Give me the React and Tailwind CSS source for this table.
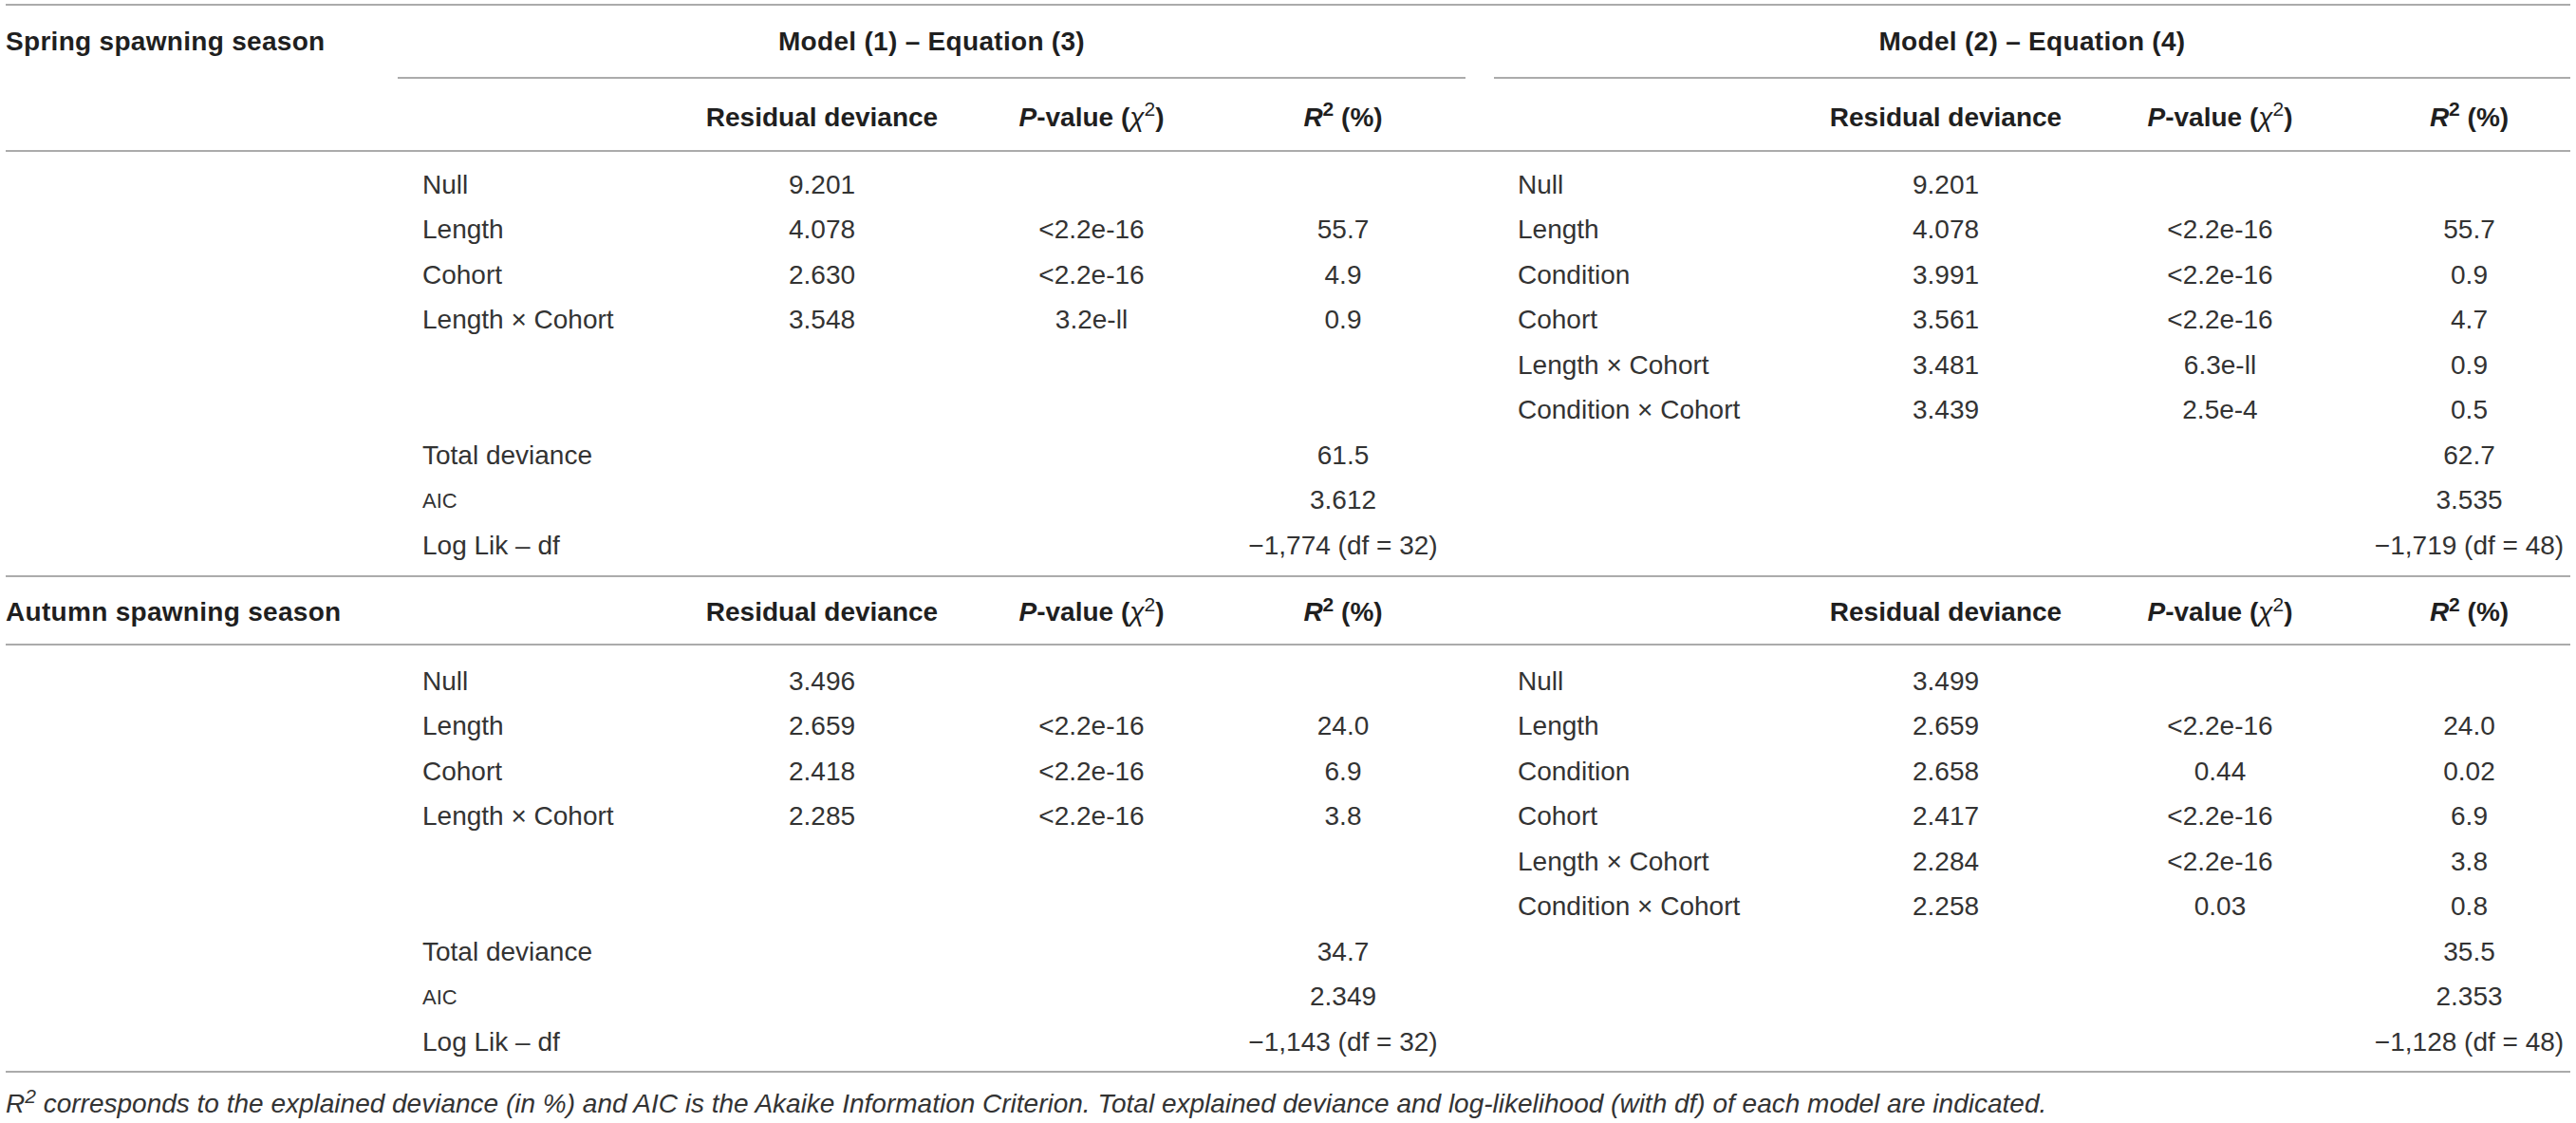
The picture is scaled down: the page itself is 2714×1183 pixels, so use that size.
const grid = 'grid grid-cols-[413px_299px_296px_272px_258px_30px_343px_266px_312px_213px]'

const spring = {
  m1: [
    ['Null', '9.201', '', ''],
    ['Length', '4.078', '<2.2e-16', '55.7'],
    ['Cohort', '2.630', '<2.2e-16', '4.9'],
    ['Length × Cohort', '3.548', '3.2e-ll', '0.9'],
    ['', '', '', ''],
    ['', '', '', ''],
    ['Total deviance', '', '', '61.5'],
    ['AIC', '', '', '3.612'],
    ['Log Lik – df', '', '', '−1,774 (df = 32)'],
  ],
  m2: [
    ['Null', '9.201', '', ''],
    ['Length', '4.078', '<2.2e-16', '55.7'],
    ['Condition', '3.991', '<2.2e-16', '0.9'],
    ['Cohort', '3.561', '<2.2e-16', '4.7'],
    ['Length × Cohort', '3.481', '6.3e-ll', '0.9'],
    ['Condition × Cohort', '3.439', '2.5e-4', '0.5'],
    ['', '', '', '62.7'],
    ['', '', '', '3.535'],
    ['', '', '', '−1,719 (df = 48)'],
  ],
}

const autumn = {
  m1: [
    ['Null', '3.496', '', ''],
    ['Length', '2.659', '<2.2e-16', '24.0'],
    ['Cohort', '2.418', '<2.2e-16', '6.9'],
    ['Length × Cohort', '2.285', '<2.2e-16', '3.8'],
    ['', '', '', ''],
    ['', '', '', ''],
    ['Total deviance', '', '', '34.7'],
    ['AIC', '', '', '2.349'],
    ['Log Lik – df', '', '', '−1,143 (df = 32)'],
  ],
  m2: [
    ['Null', '3.499', '', ''],
    ['Length', '2.659', '<2.2e-16', '24.0'],
    ['Condition', '2.658', '0.44', '0.02'],
    ['Cohort', '2.417', '<2.2e-16', '6.9'],
    ['Length × Cohort', '2.284', '<2.2e-16', '3.8'],
    ['Condition × Cohort', '2.258', '0.03', '0.8'],
    ['', '', '', '35.5'],
    ['', '', '', '2.353'],
    ['', '', '', '−1,128 (df = 48)'],
  ],
}

function Rule() {
  return <div className="h-[2px] bg-[#ababab]" />
}

function Heads() {
  return (
    <>
      <div className="flex justify-center">Residual deviance</div>
      <div className="flex justify-center whitespace-nowrap">
        <span><i>P</i>-value (<span className="font-normal italic">χ</span><sup className="font-normal">2</sup>)</span>
      </div>
      <div className="flex justify-center whitespace-nowrap">
        <span><i>R</i><sup>2</sup> (%)</span>
      </div>
    </>
  )
}

function Cells({ r, pad }) {
  return (
    <>
      <div className={`${pad} whitespace-nowrap ${r[0] === 'AIC' ? 'text-[22px]' : ''}`}>{r[0]}</div>
      <div className="text-center">{r[1]}</div>
      <div className="text-center">{r[2]}</div>
      <div className="text-center whitespace-nowrap">{r[3]}</div>
    </>
  )
}

function Rows({ data }) {
  return data.m1.map((r, i) => (
    <div key={i} className={`${grid} h-[47.5px] items-center`}>
      <div />
      <Cells r={r} pad="pl-[26px]" />
      <div />
      <Cells r={data.m2[i]} pad="pl-[25px]" />
    </div>
  ))
}

export default function App() {
  return (
    <div className="bg-white min-h-screen px-[6px] pt-[4px] font-['Liberation_Sans',Arial,sans-serif] text-[28px] text-[#333333]">
      <Rule />
      <div className={`${grid} h-[75px] items-center font-bold text-[#1f1f1f] tracking-[0.3px]`}>
        <div>Spring spawning season</div>
        <div className="col-span-4 text-center">Model (1) – Equation (3)</div>
        <div />
        <div className="col-span-4 text-center">Model (2) – Equation (4)</div>
      </div>
      <div className={`${grid} h-[2px]`}>
        <div />
        <div className="col-span-4 bg-[#ababab]" />
        <div />
        <div className="col-span-4 bg-[#ababab]" />
      </div>
      <div className={`${grid} h-[75px] items-center pt-[6px] font-bold text-[#1f1f1f]`}>
        <div />
        <div />
        <Heads />
        <div />
        <div />
        <Heads />
      </div>
      <Rule />
      <div className="h-[11px]" />
      <Rows data={spring} />
      <div className="h-[7.5px]" />
      <Rule />
      <div className={`${grid} h-[70px] items-center pt-[4px] font-bold text-[#1f1f1f]`}>
        <div className="tracking-[0.3px]">Autumn spawning season</div>
        <div />
        <Heads />
        <div />
        <div />
        <Heads />
      </div>
      <Rule />
      <div className="h-[14px]" />
      <Rows data={autumn} />
      <div className="h-[6.5px]" />
      <Rule />
      <p className="pt-[12px] italic text-[#333333]">
        <i>R</i><sup>2</sup> corresponds to the explained deviance (in %) and AIC is the Akaike Information Criterion. Total explained deviance and log-likelihood (with df) of each model are indicated.
      </p>
    </div>
  )
}
